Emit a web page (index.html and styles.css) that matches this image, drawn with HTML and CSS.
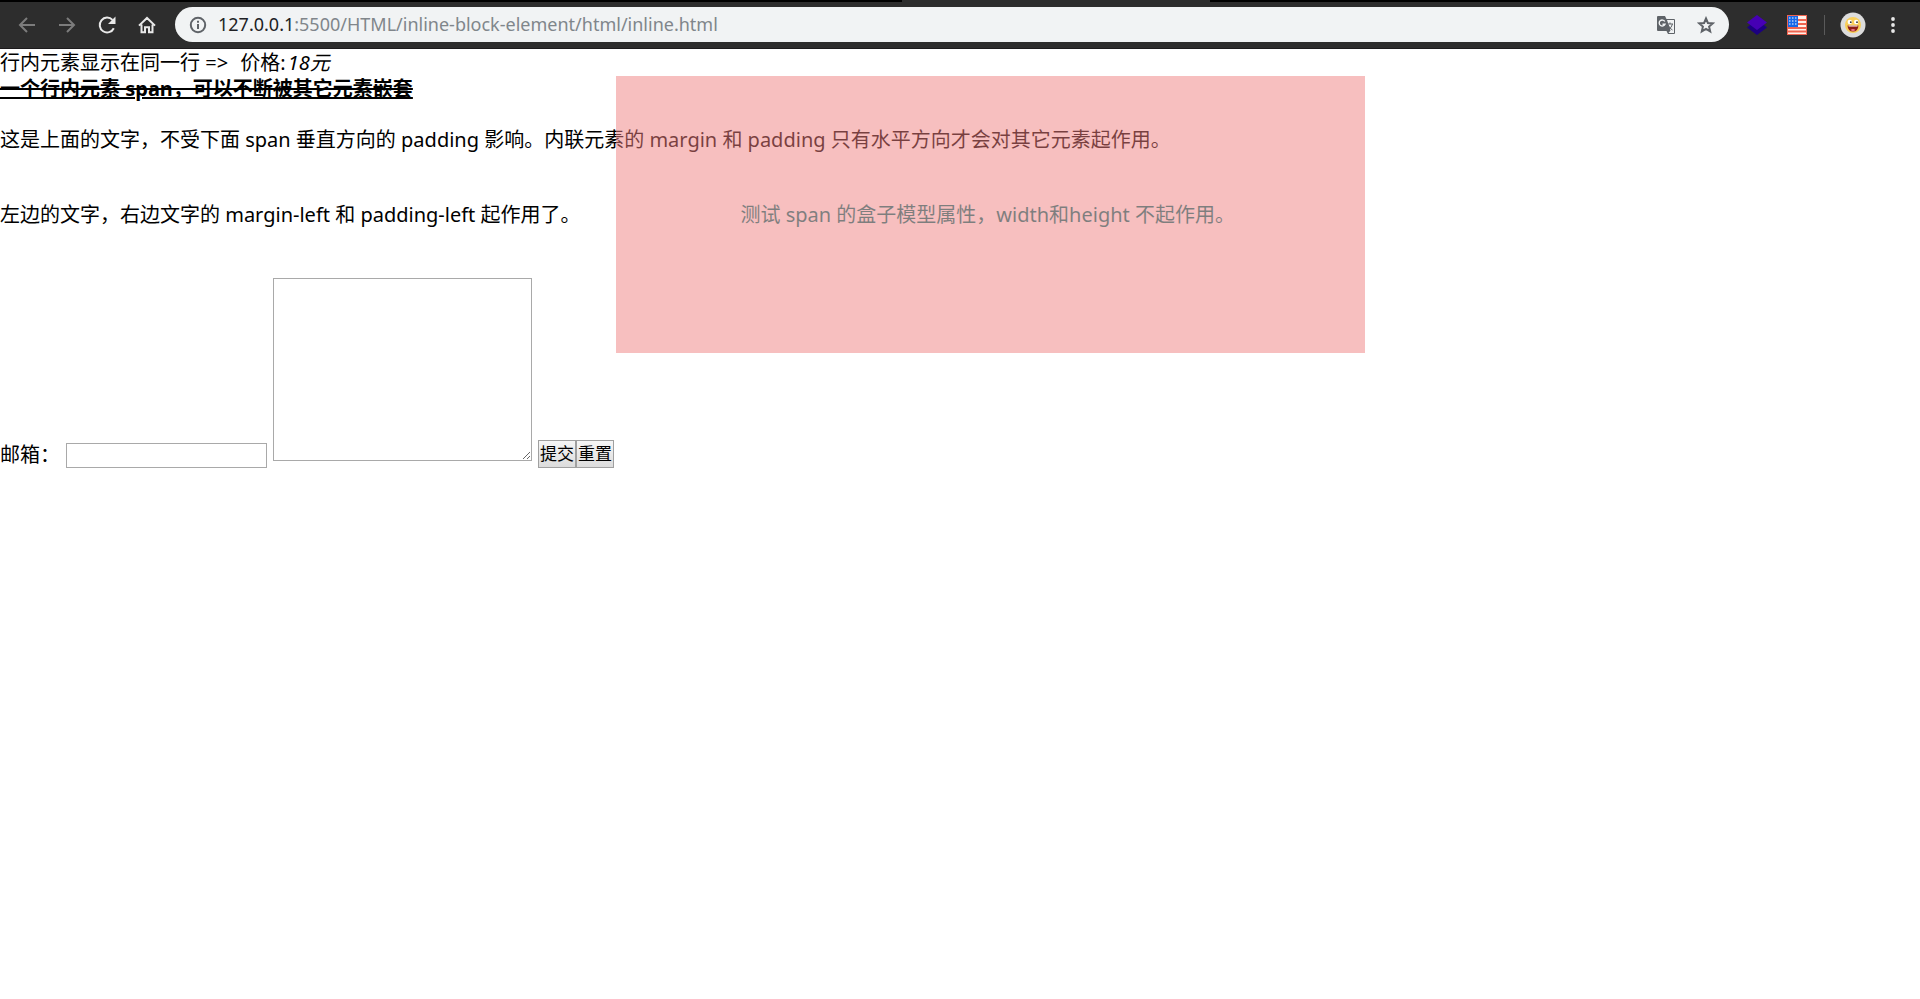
FILE: index.html
```html
<!DOCTYPE html>
<html lang="zh-CN">
<head>
<meta charset="utf-8">
<title>inline</title>
<link rel="stylesheet" href="styles.css">
</head>
<body>
<header class="toolbar">
  <div class="tabstrip"><span class="active-tab"></span></div>
  <nav class="bar">
    <button class="icon-btn dim" aria-label="Back"><svg viewBox="0 0 20 20"><path d="M18 10H3M10 3L3 10l7 7"/></svg></button>
    <button class="icon-btn dim" aria-label="Forward"><svg viewBox="0 0 20 20"><path d="M2 10h15M10 3l7 7-7 7"/></svg></button>
    <button class="icon-btn" aria-label="Reload"><svg viewBox="0 0 20 20"><path d="M16.800 13.200A7.400 7.400 0 1 1 15.500 4.900"/><path class="solid" d="M18.500 1.600V9H11z"/></svg></button>
    <button class="icon-btn" aria-label="Home"><svg viewBox="0 0 20 20"><path d="M2 10.600L10 3l8 7.600M4.500 9.500v7.800H8v-5h4v5h3.500V9.500"/></svg></button>
    <div class="omnibox">
      <button class="omni-btn" aria-label="Site information"><svg viewBox="0 0 18 18"><circle cx="9" cy="9" r="7.200"/><path d="M9 8v5M9 4.800v2"/></svg></button>
      <div class="url" role="textbox" aria-label="Address"><span class="host">127.0.0.1</span>:5500/HTML/inline-block-element/html/inline.html</div>
      <button class="omni-btn" aria-label="Translate"><svg viewBox="0 0 18 18"><path class="fill" d="M1 0h7l1.500 3H17q1 0 1 1v13q0 1-1 1h-6l-1.500-3H1q-1 0-1-1V1q0-1 1-1z"/><path class="paper" d="M10 4h7v13h-5.500l2-2.500z"/><path class="thin" d="M10.500 8H16M13 6.500V8m2.500 0q-1 4-4 5.500m-.5-4.500q2 4 4.500 5"/><path class="letter" d="M7.800 5.500A3 3 0 1 0 8 8.200H5.500"/></svg></button>
      <button class="omni-btn" aria-label="Bookmark"><svg viewBox="0 0 18 18"><path d="M9 2.500l1.900 4.500 4.900.4-3.700 3.200 1.100 4.800L9 12.900l-4.200 2.500 1.100-4.800L2.200 7.400 7.100 7z"/></svg></button>
    </div>
    <button class="icon-btn" aria-label="Layers extension"><svg viewBox="0 0 20 20"><path fill="#1c0080" stroke="none" d="M0 12.500l3-2.500h14l3 2.500L10 20z"/><path fill="#4600b4" stroke="none" d="M10 0l10 7.500L10 15 0 7.500z"/></svg></button>
    <button class="icon-btn" aria-label="Flag extension"><svg viewBox="0 0 20 20"><g stroke="none"><path fill="#fff0e8" d="M0 0h20v20H0z"/><path fill="#ef6450" d="M0 0h20v1H0zM0 0h1v20H0zM19 0h1v20h-1zM11 4h9v2h-9zM11 8h9v2h-9zM1 12h19v2H1zM1 15.500h19v2H1zM0 19h20v1H0z"/><path fill="#1767e8" d="M1 1h10v11H1z"/></g><path stroke="#fff" stroke-width="1" stroke-dasharray="1.500 1.500" d="M2 3h9M2 6h9M2 9h9"/></svg></button>
    <span class="divider"></span>
    <button class="avatar" aria-label="Profile"><svg viewBox="0 0 26 26"><g stroke="none"><circle cx="13" cy="13" r="12.500" fill="#dcdcdc"/><circle cx="13" cy="13" r="8" fill="#f9cf5a"/><circle cx="9.800" cy="10" r="2.200" fill="#fff"/><circle cx="16.200" cy="10" r="2.200" fill="#fff"/><circle cx="10.800" cy="10.200" r=".9" fill="#333"/><circle cx="17" cy="10.200" r=".9" fill="#333"/><path fill="#8e1c16" d="M7.500 13.500h11q-.5 6-5.500 6t-5.500-6z"/><path fill="#fff" d="M8.500 13.500h9v1h-9z"/><path fill="#f27a8a" d="M10.500 18q2.500-2 5 0-2.500 2-5 0z"/></g></svg></button>
    <button class="icon-btn" aria-label="Menu"><svg viewBox="0 0 20 20"><g fill="#e8e8e8" stroke="none"><circle cx="10" cy="4" r="1.900"/><circle cx="10" cy="10" r="1.900"/><circle cx="10" cy="16" r="1.900"/></g></svg></button>
  </nav>
</header>
<main class="page">
  <div>行内元素显示在同一行 =&gt; <span class="price">价格:</span><em>18元</em></div>
  <div><span><b><del><u>一个行内元素 span，可以不断被其它元素嵌套</u></del></b></span></div>
  <p class="above">这是上面的文字，不受下面 span 垂直方向的 padding 影响。内联元素的 margin 和 padding 只有水平方向才会对其它元素起作用。</p>
  <div class="row">左边的文字，右边文字的 margin-left 和 padding-left 起作用了。<span class="box">测试 span 的盒子模型属性，width和height 不起作用。</span></div>
  <form class="form">
    <label for="mail">邮箱：</label>
    <input id="mail" class="mail" type="text">
    <textarea class="message" aria-label="内容"></textarea>
    <div class="actions"><button type="submit" class="btn">提交</button><button type="reset" class="btn">重置</button></div>
  </form>
</main>
</body>
</html>
```
FILE: styles.css
```css
* { box-sizing: border-box; }
body {
  margin: 0;
  background: #fff;
  color: #000;
  font: 20px/26px "Noto Sans", "Noto Sans CJK SC", sans-serif;
}
button { font: inherit; }

.toolbar { background: #2d2d2d; border-bottom: 1px solid #1c1a1c; }
.tabstrip { display: flex; height: 2px; background: #000; }
.active-tab { width: 16%; margin-left: 47%; background: #2d2d2d; }
.bar { display: flex; align-items: center; height: 46px; padding: 0 17px 1px 17px; }
.icon-btn, .avatar, .omni-btn {
  flex: none;
  padding: 0;
  border: 0;
  background: none;
}
.icon-btn { width: 20px; height: 20px; margin-right: 20px; }
.icon-btn:last-child { margin-right: 0; }
.bar svg { display: block; width: 100%; height: 100%; fill: none; stroke: #e8e8e8; stroke-width: 2; }
.bar .dim svg { stroke: #7c7c7c; }
.bar .solid { fill: #e8e8e8; stroke: none; }
.omnibox {
  display: flex;
  flex: 1;
  align-items: center;
  height: 35px;
  margin: 0 18px 0 -2px;
  padding: 0 14px;
  border-radius: 18px;
  background: #f1f3f4;
}
.omni-btn { width: 18px; height: 18px; margin-left: 22px; }
.omni-btn:first-child { margin-left: 0; }
.bar .omni-btn svg { stroke: #5f6368; }
.bar .omni-btn .fill { fill: #5f6368; stroke: none; }
.bar .omni-btn .paper { fill: #f1f3f4; stroke: none; }
.bar .omni-btn .thin { stroke-width: 1; }
.bar .omni-btn .letter { stroke: #f1f3f4; stroke-width: 1.4; }
.url { flex: 1; margin-left: 11px; color: #80868b; font-size: 18px; line-height: 24px; padding-bottom: 2px; white-space: nowrap; }
.host { color: #202124; }
.divider { width: 1px; height: 20px; margin-right: 15px; margin-left: -3px; background: #5a5a5a; }
.avatar { width: 26px; height: 26px; margin-right: 17px; }

.page { padding-top: 1px; }
.price { margin-left: 7px; }
.price + em { margin-left: 2px; }
.above { margin: 25px 0 49px; }
.row { white-space: nowrap; }
.box {
  margin-left: 35px;
  padding: 125px 130px 125px 125px;
  background: lightcoral;
  opacity: 0.5;
}
.form { display: flex; align-items: flex-end; margin-top: 50px; }
.mail {
  width: 201px;
  height: 25px;
  margin: 0 6px;
  padding: 1px;
  border: 1px solid #a9a9a9;
  font: inherit;
}
.message {
  width: 259px;
  height: 183px;
  margin: 0 6px 7px 0;
  padding: 2px;
  border: 1px solid #a9a9a9;
  font: inherit;
}
.actions { display: flex; }
.btn {
  height: 28px;
  padding: 0 1px;
  border: 1px solid #a0a0a0;
  background: linear-gradient(#f6f6f6, #dcdcdc);
  color: #000;
  font-size: 17px;
  line-height: 26px;
}
```
